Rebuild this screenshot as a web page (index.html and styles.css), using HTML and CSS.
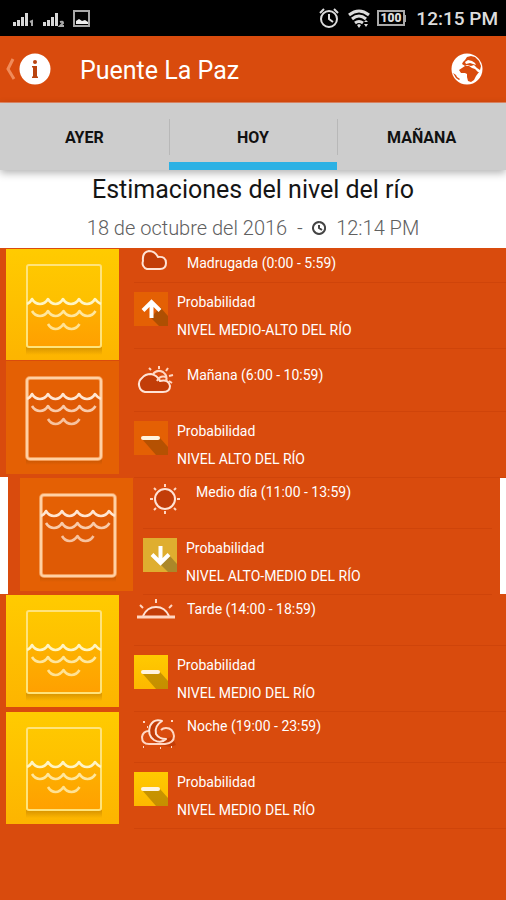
FILE: index.html
```html
<!DOCTYPE html>
<html lang="es">
<head>
<meta charset="utf-8">
<meta name="viewport" content="width=device-width, initial-scale=1">
<title>Puente La Paz</title>
<link rel="stylesheet" href="styles.css">
</head>
<body>
<svg class="defs" aria-hidden="true">
  <defs>
    <linearGradient id="gold" x1="0" y1="0" x2="0" y2="1"><stop offset="0" stop-color="#ffcb00"/><stop offset="1" stop-color="#fdb400"/></linearGradient>
    <linearGradient id="water" x1="0" y1="0" x2="0" y2="1"><stop offset="0" stop-color="#fdb200"/><stop offset="1" stop-color="#ffa000"/></linearGradient>
    <linearGradient id="fade" x1="0" y1="0" x2="0" y2="1"><stop offset="0" stop-color="#7a3c00" stop-opacity=".3"/><stop offset="1" stop-color="#7a3c00" stop-opacity="0"/></linearGradient>
    <g id="waves" fill="none" stroke-width="2.6" stroke-linejoin="round">
      <path d="M21 55q3-1 5-5q3 5 8 5t8-5q3 5 7.500 5t7.500-5q3 5 8 5t8-5q3 5 8 5t8-5q3 4 6 5"/>
      <path stroke-opacity=".8" d="M26 62q3 5 8 5t8-5q3 5 7.500 5t8-5q3 5 8 5t8-5q3 5 8 5t8-5"/>
      <path stroke-opacity=".75" d="M42 75q3 5 7.500 5t8-5q3 5 8 5t8-5"/>
    </g>
  </defs>
  <symbol id="medium" viewBox="0 0 113 113">
    <path fill="url(#gold)" d="M0 0h113v112H0z"/>
    <path fill="url(#fade)" d="M20 98h76v8H20z"/>
    <path fill="url(#water)" d="M21 55l5-4 8 4 8-4 8 4 8-4 8 4 8-4 8 4 7-4 6 4v43H21z"/>
    <rect x="21" y="16" width="74" height="82" rx="2" fill="none" stroke="#ffe37a" stroke-width="2"/>
    <use href="#waves" stroke="#fff5c4"/>
  </symbol>
  <symbol id="high" viewBox="0 0 113 113">
    <path fill="#e46004" d="M0 0h113v113H0z"/>
    <path fill="url(#fade)" d="M20 98h76v6H20z"/>
    <path fill="#df5a05" d="M21 37h74v61H21z"/>
    <rect x="21" y="17" width="74" height="81" rx="3" fill="none" stroke="#f39a55" stroke-width="4"/>
    <rect x="21" y="17" width="74" height="81" rx="3" fill="none" stroke="#ffd0a4" stroke-width="2"/>
    <use href="#waves" y="-17" stroke="#ffe6d2"/>
  </symbol>
  <symbol id="minus" viewBox="0 0 34 34">
    <path fill="#4a3000" fill-opacity=".3" d="M8 18l18-1 8 9v8H22z"/>
    <path stroke="#fff4df" stroke-width="4" stroke-linecap="round" d="M9 17h15"/>
  </symbol>
  <symbol id="up" viewBox="0 0 34 34">
    <path fill="#4a3000" fill-opacity=".35" d="M17 26l9-11 8 9v10h-9z"/>
    <path fill="none" stroke="#fff" stroke-width="4" d="M17.500 26V10M9 18.500l8.500-8.500 8.500 8.500"/>
  </symbol>
  <symbol id="down" viewBox="0 0 34 34">
    <path fill="#4a4020" fill-opacity=".35" d="M17 26l9-9 8 9v8H25z"/>
    <path fill="none" stroke="#fff" stroke-width="4" d="M17.500 8v16M9 16.500l8.500 8.500 8.500-8.500"/>
  </symbol>
</svg>

<div class="status">
  <svg width="80" height="20" viewBox="0 0 80 20" aria-hidden="true">
    <path fill="#d8d8d8" d="M1 14h3v4H1zM5 12h3v6H5zM9 9h3v9H9zM13 5h3v13h-3zM31 14h3v4h-3zM35 12h3v6h-3zM39 9h3v9h-3zM43 5h3v13h-3z"/>
    <path fill="none" stroke="#aaa" stroke-width="2" d="M18 14l2-1v5M48 14q3-1 3 1l-3 3h4"/>
    <path fill="none" stroke="#a8a8a8" stroke-width="2" d="M62 3h15v15H62z"/><path fill="#eee" d="M64 16v-3l3-2 3 2 3-1 3 2v2z"/>
  </svg>
  <div class="status-right">
    <svg width="88" height="22" viewBox="0 0 88 22" aria-hidden="true">
      <g fill="none" stroke="#ddd" stroke-width="2">
        <circle cx="11" cy="12" r="8"/><path d="M11 7v5l4 3M2 6l4-4M20 6l-4-4"/>
        <path stroke-width="3" d="M31 8q10-8 20 0M34 12q7-6 14 0M37 16q4-3 8 0"/>
      </g>
      <path fill="#ddd" d="M39 18l2 3 2-3-2-1zM46 15l2-2 2 2zM46 17h4l-2 3z"/>
      <path fill="none" stroke="#aaa" stroke-width="2" d="M60 4h26v14H60z"/><path fill="#aaa" d="M87 8h1v7h-1z"/>
      <text class="battery" x="73" y="15" text-anchor="middle">100</text>
    </svg>
    <span>12:15 PM</span>
  </div>
</div>

<header class="bar">
  <button class="info" type="button" aria-label="Información">
    <svg width="46" height="34" viewBox="0 0 46 34">
      <path fill="none" stroke="#f08b5a" stroke-width="3" d="M7 7L2 17l6 10"/>
      <circle cx="29" cy="17" r="15.500" fill="#fff"/>
      <circle cx="29" cy="10" r="2" fill="#b9440f"/>
      <path fill="#b9440f" d="M26 14h5v10l1 1v1h-6v-1l1-1v-8l-1-1z"/>
    </svg>
  </button>
  <h1>Puente La Paz</h1>
  <button class="globe" type="button" aria-label="Mapa">
    <svg width="34" height="34" viewBox="0 0 34 34">
      <circle cx="17" cy="17" r="15.500" fill="#fff"/>
      <path fill="#d94b0d" d="M15 8l2-3 4-1 4 1 4 4 2 5-1 4-3-2-3-3-3 1-4-1-2 1-3-2 1-2zM12 16l3-2h4l3 2 3 1 3 3h1l-3 4-2 4-3 2-3-1-1-4v-3l-2-1-4 0-2-3zM3 21l3 2 1 2 3 2-1 1-3-2z"/>
      <path fill="#fff" d="M15 10l3-2 4 1 3 2 1 2-3-1-3-1-4 1z"/>
    </svg>
  </button>
</header>

<nav class="tabs">
  <a href="#ayer">AYER</a>
  <a class="active" href="#hoy" aria-current="page">HOY</a>
  <a href="#manana">MAÑANA</a>
</nav>

<section class="heading">
  <h2>Estimaciones del nivel del río</h2>
  <p>18 de octubre del 2016 &nbsp;-&nbsp;
    <svg width="14" height="14" viewBox="0 0 14 14" aria-hidden="true"><path fill="none" stroke="#444" stroke-width="2" d="M7 1a6 6 0 1 0 .1 0M7 4v3l3 2"/></svg>
    &nbsp;12:14 PM</p>
</section>

<main class="list">
  <article class="row first">
    <svg class="tile"><use href="#medium"/></svg>
    <div class="info-col">
      <div class="period">
        <svg class="weather" viewBox="0 0 42 34" aria-hidden="true"><path class="cloud" d="M13 22a6 6 0 0 1-4-8q-1-9 6-10 6 0 9 6 8-1 8 6 0 6-6 6z"/></svg>
        <h3>Madrugada (0:00 - 5:59)</h3>
      </div>
      <div class="chance">
        <svg class="badge orange"><use href="#up"/></svg>
        <p>Probabilidad<br>NIVEL MEDIO-ALTO DEL RÍO</p>
      </div>
    </div>
  </article>

  <article class="row">
    <svg class="tile"><use href="#high"/></svg>
    <div class="info-col">
      <div class="period">
        <svg class="weather" viewBox="0 0 42 34" aria-hidden="true"><path class="cloud" d="M11 28a8 8 0 0 1-3-14q3-4 9-4 6 1 9 7 9-2 10 5 0 6-7 6z"/><path class="line" d="M19 10q4-5 10-2 5 4 3 9M23 17q3-6 9-4M25 5V2M32 7l2-3M35 12l4-1M35 17l3 2M17 6l-2-2"/></svg>
        <h3>Mañana (6:00 - 10:59)</h3>
      </div>
      <div class="chance">
        <svg class="badge orange"><use href="#minus"/></svg>
        <p>Probabilidad<br>NIVEL ALTO DEL RÍO</p>
      </div>
    </div>
  </article>

  <article class="row selected">
    <svg class="tile"><use href="#high"/></svg>
    <div class="info-col">
      <div class="period">
        <svg class="weather" viewBox="0 0 42 34" aria-hidden="true"><circle class="cloud" cx="22" cy="18" r="10"/><path class="line" d="M22 6V3M22 30v3M10 18H7M34 18h3M13 9l-2-2M31 9l2-2M13 27l-2 2M31 27l2 2"/></svg>
        <h3>Medio día (11:00 - 13:59)</h3>
      </div>
      <div class="chance">
        <svg class="badge mustard"><use href="#down"/></svg>
        <p>Probabilidad<br>NIVEL ALTO-MEDIO DEL RÍO</p>
      </div>
    </div>
  </article>

  <article class="row">
    <svg class="tile"><use href="#medium"/></svg>
    <div class="info-col">
      <div class="period">
        <svg class="weather" viewBox="0 0 42 34" aria-hidden="true"><path class="cloud" d="M9 18q4-9 13-9t13 9"/><path class="line" d="M22 5V1M9 10L6 7M35 10l3-3"/><path class="line thick" d="M3 19h38"/></svg>
        <h3>Tarde (14:00 - 18:59)</h3>
      </div>
      <div class="chance">
        <svg class="badge yellow"><use href="#minus"/></svg>
        <p>Probabilidad<br>NIVEL MEDIO DEL RÍO</p>
      </div>
    </div>
  </article>

  <article class="row">
    <svg class="tile"><use href="#medium"/></svg>
    <div class="info-col">
      <div class="period">
        <svg class="weather" viewBox="0 0 42 34" aria-hidden="true"><path class="shade" d="M18 28l18 4 6-2-4-8z"/><path class="line" d="M15 16q-6 0-7 6 0 7 7 7h16q9-1 9-8-1-8-8-8-3 0-5 2"/><path class="cloud" d="M28 6q-8-3-12 5-3 9 4 14 7 4 12-1-7 0-10-5-2-8 6-13z"/><path class="line" d="M9 7h2M13 12h1M37 6h2M37 32h1M9 32h1M26 33h1"/></svg>
        <h3>Noche (19:00 - 23:59)</h3>
      </div>
      <div class="chance">
        <svg class="badge yellow"><use href="#minus"/></svg>
        <p>Probabilidad<br>NIVEL MEDIO DEL RÍO</p>
      </div>
    </div>
  </article>
</main>
</body>
</html>
```
FILE: styles.css
```css
* { box-sizing: border-box; }
body {
  margin: 0;
  min-height: 100vh;
  background: #d94b0d;
  color: #fff;
  font-family: Roboto, "Liberation Sans", sans-serif;
}
h1, h2, h3, p { margin: 0; font-weight: 400; }
svg { flex: none; }
.defs { position: absolute; width: 0; height: 0; }

.status {
  display: flex;
  align-items: center;
  justify-content: space-between;
  height: 36px;
  padding: 0 8px 0 12px;
  background: #000;
  color: #ddd;
  font-size: 19px;
  font-weight: 500;
}
.status-right { display: flex; align-items: center; gap: 10px; }
.battery { fill: #ddd; font-size: 12px; font-weight: 900; }

.bar {
  display: flex;
  align-items: center;
  height: 67px;
  padding: 0 22px 0 6px;
  border-bottom: 1px solid #e58a66;
}
.bar button { display: flex; padding: 0; border: 0; background: none; }
.bar h1 { flex: 1; padding: 2px 0 0 28px; font-size: 25px; }

.tabs {
  position: relative;
  display: grid;
  grid-template-columns: repeat(3, 1fr);
  height: 67px;
  background: #cdcdcd;
  box-shadow: 0 3px 8px rgba(0, 0, 0, .3);
}
.tabs a {
  display: flex;
  align-items: center;
  justify-content: center;
  color: #111;
  font-size: 16px;
  font-weight: 700;
  text-decoration: none;
  border-bottom: 8px solid transparent;
  padding-top: 10px;
  background: linear-gradient(#b8b8b8, #b8b8b8) left 16px / 1px 36px no-repeat;
}
.tabs a:first-child { background: none; }
.tabs .active { border-bottom-color: #2cb1e4; }

.heading {
  height: 78px;
  background: #fff;
  text-align: center;
}
.heading h2 { padding-top: 3px; color: #151515; font-size: 25px; line-height: 34px; }
.heading p { color: #606060; font-size: 20px; font-weight: 300; line-height: 42px; }

.row {
  display: flex;
  height: 117px;
  padding: 1px 0 0 6px;
  gap: 15px;
}
.tile { width: 113px; height: 113px; }
.info-col { flex: 1; }
.period {
  display: flex;
  gap: 10px;
  height: 51px;
  border-bottom: 1px solid #cf440a;
}
.weather { width: 42px; height: 34px; margin-top: 3px; }
.period h3 { padding: 5px 0 0 1px; font-size: 14px; line-height: 18px; }
.chance {
  display: flex;
  gap: 9px;
  height: 66px;
  padding-top: 9px;
  border-bottom: 1px solid #cf440a;
}
.chance p { font-size: 14px; line-height: 28px; margin-top: -4px; }
.badge { width: 34px; height: 34px; }
.orange { background: #e46004; }
.mustard { background: #dfae2f; }
.yellow { background: linear-gradient(#ffca00, #fdb800); }

.first { height: 112px; overflow: hidden; }
.first .period { height: 34px; }
.first .weather { margin-top: -2px; }
.selected {
  padding-left: 12px;
  padding-right: 8px;
  gap: 10px;
  border: solid #fff;
  border-width: 0 6px 0 8px;
}

.cloud { fill: #c23d08; stroke: #ffe3d5; stroke-width: 2; stroke-linejoin: round; }
.line { fill: none; stroke: #ffd6c2; stroke-width: 2; }
.thick { stroke-width: 3; }
.shade { fill: #c23d08; }
```
